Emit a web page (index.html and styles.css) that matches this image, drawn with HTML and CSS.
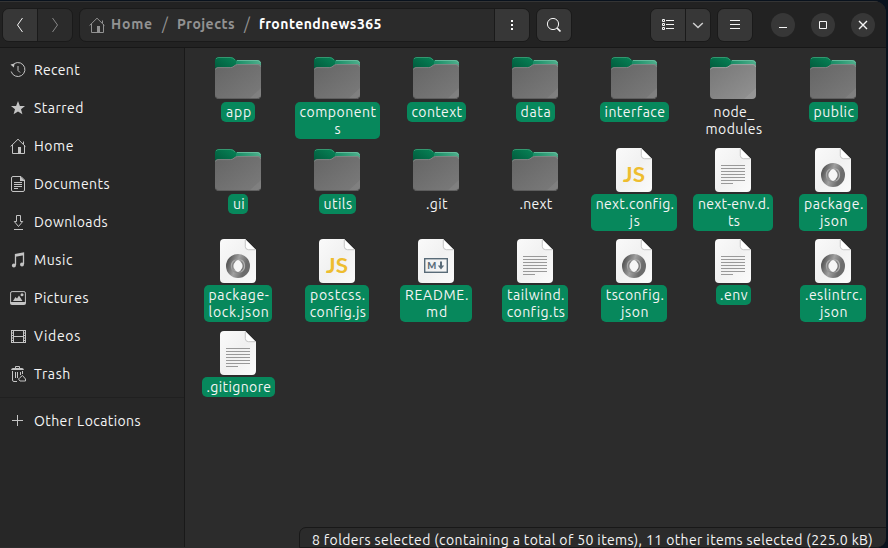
FILE: index.html
```html
<!DOCTYPE html>
<html lang="en">
<head>
<meta charset="utf-8">
<title>frontendnews365</title>
<link rel="stylesheet" href="styles.css">
</head>
<body>
<svg class="defs" width="0" height="0" aria-hidden="true">
  <defs>
    <linearGradient id="gTab" x1="0" y1="1" x2="1" y2="0"><stop offset="0" stop-color="#00573a"/><stop offset="1" stop-color="#078457"/></linearGradient>
    <linearGradient id="gBack" x1="0" y1="0" x2="1" y2="0"><stop offset=".4" stop-color="#128961"/><stop offset="1" stop-color="#4faf8c"/></linearGradient>
    <linearGradient id="gFront" x1="0" y1="0" x2="1" y2="1"><stop offset="0" stop-color="#656565"/><stop offset="1" stop-color="#7b7b7b"/></linearGradient>
    <linearGradient id="gLight" x1="0" y1="0" x2="1" y2="1"><stop offset="0" stop-color="#777"/><stop offset="1" stop-color="#929292"/></linearGradient>
    <linearGradient id="gPage" x1="0" y1="0" x2="1" y2="1"><stop offset="0" stop-color="#fafafa"/><stop offset=".5" stop-color="#f1f1f1"/><stop offset="1" stop-color="#fbfbfb"/></linearGradient>
    <linearGradient id="gRing" x1="0" y1="0" x2="1" y2=".35"><stop offset="0" stop-color="#5c5c5c"/><stop offset=".5" stop-color="#a0a0a0"/><stop offset="1" stop-color="#6c6c6c"/></linearGradient>
    <linearGradient id="gRing2" x1="0" y1="0" x2="1" y2="1"><stop offset="0" stop-color="#bcbcbc"/><stop offset="1" stop-color="#777"/></linearGradient>
  </defs>
  <symbol id="folderBack" viewBox="0 0 46 42">
    <path d="M2 5H19L22 3H42Q46 3 46 7V18H0Z" fill="url(#gBack)"/>
    <path d="M22 3.500H42Q45 3.500 45.600 6" fill="none" stroke="#6fc3a4" stroke-width=".8"/>
    <path d="M0 14V4Q0 0 4 0H15.500Q18 0 19.500 1.800L21 3.200V8L17.500 10.500Z" fill="url(#gTab)"/>
    <path d="M1 2Q2 .5 4 .5H15.500Q18 .5 20 3" fill="none" stroke="#409f78" stroke-width=".8"/>
  </symbol>
  <symbol id="page" viewBox="0 0 36 44">
    <path d="M4 0H25L36 11V40Q36 44 32 44H4Q0 44 0 40V4Q0 0 4 0Z" fill="url(#gPage)"/>
    <path d="M25 0L36 11H28.500Q25 11 25 7.500Z" fill="#fff"/>
    <path d="M25.300 1V7.500Q25.300 10.700 28.500 10.700H35.500" fill="none" stroke="#b5b5b5" stroke-width=".8"/>
  </symbol>
  <symbol id="folder" viewBox="0 0 46 42">
    <use href="#folderBack" width="46" height="42"/>
    <path d="M3 10.200H15.500Q17.500 10.200 19 8.800Q20.500 7.200 22.500 7.200H43Q46 7.200 46 10V38Q46 42 42 42H4Q0 42 0 38V13Q0 10.200 3 10.200Z" fill="url(#gFront)"/>
    <path d="M46 31L34 42H42Q46 42 46 38Z" fill="#fff" opacity=".06"/>
    <path d="M.5 12.500Q1 10.600 3 10.600H15.500Q17.500 10.600 19 9.200Q20.500 7.600 22.500 7.600H43Q45.400 7.600 45.600 10" fill="none" stroke="#8a8a8a" stroke-width=".8"/>
    <path d="M1 40Q2 41.600 4 41.600H42Q44 41.600 45 40" fill="none" stroke="#555" stroke-width=".8"/>
  </symbol>
  <symbol id="folderLight" viewBox="0 0 46 42">
    <use href="#folderBack" width="46" height="42"/>
    <path d="M3 10.200H15.500Q17.500 10.200 19 8.800Q20.500 7.200 22.500 7.200H43Q46 7.200 46 10V38Q46 42 42 42H4Q0 42 0 38V13Q0 10.200 3 10.200Z" fill="url(#gLight)"/>
    <path d="M46 31L34 42H42Q46 42 46 38Z" fill="#fff" opacity=".07"/>
    <path d="M.5 12.500Q1 10.600 3 10.600H15.500Q17.500 10.600 19 9.200Q20.500 7.600 22.500 7.600H43Q45.400 7.600 45.600 10" fill="none" stroke="#aaa" stroke-width=".8"/>
  </symbol>
  <symbol id="text" viewBox="0 0 36 44">
    <use href="#page" width="36" height="44"/>
    <path d="M6 17.500H30M6 20.500H30M6 23.500H30M6 26.500H30M6 29.500H30M6 32.500H30M6 35.500H18" stroke="#999" stroke-width="1"/>
  </symbol>
  <symbol id="js" viewBox="0 0 36 44">
    <use href="#page" width="36" height="44"/>
  </symbol>
  <symbol id="json" viewBox="0 0 36 44">
    <use href="#page" width="36" height="44"/>
    <circle cx="18" cy="27" r="8.300" fill="none" stroke="url(#gRing)" stroke-width="7.400"/>
    <path d="M18 20.500C10 21.500 10 33 18.500 33.500C13 35 10 30 11 25C12 22 14 20 18 20.500Z" fill="url(#gRing2)"/>
    <path d="M18 33.500C26 32.500 26 21 17.500 20.500C23 19 26 24 25 29C24 32 22 34 18 33.500Z" fill="#b0b0b0"/>
    <ellipse cx="18" cy="27" rx="3.700" ry="6" fill="#f6f6f6"/>
  </symbol>
  <symbol id="md" viewBox="0 0 36 44">
    <use href="#page" width="36" height="44"/>
    <rect x="6.700" y="19.700" width="22.600" height="13.600" fill="none" stroke="#596b78" stroke-width="1.400"/>
    <path d="M23 22.500V28" stroke="#596b78" stroke-width="2"/><path d="M19.800 26.500H26.200L23 30.500Z" fill="#596b78"/>
  </symbol>
  <symbol id="home" viewBox="0 0 16 16">
    <path d="M.6 8.500L8 1.200L15.400 8.500M2.500 7V15.500H14.500V7M13.500 3.500V6" fill="none" stroke="currentColor"/><path d="M8 9h3v6H8z" fill="currentColor"/>
  </symbol>
</svg>

<div class="window">
  <header class="bar">
    <div class="group nav">
      <button class="raised"><svg width="16" height="16"><path d="M10.500 1L5.500 8L10.500 15" class="line bright"/></svg></button>
      <button><svg width="16" height="16"><path d="M5.500 1L10.500 8L5.500 15" class="line dim"/></svg></button>
    </div>
    <div class="group path">
      <div class="crumbs">
        <svg width="16" height="16"><use href="#home"/></svg>
        <span class="crumb home" data-w="42">Home</span><span class="slash">/</span>
        <span class="crumb projects" data-w="58">Projects</span><span class="slash">/</span>
        <span class="crumb current" data-w="123">frontendnews365</span>
      </div>
      <button class="raised"><svg width="16" height="16"><path d="M7 3h2v2H7zM7 7h2v2H7zM7 11h2v2H7z" fill="#fff"/></svg></button>
    </div>
    <div class="group search"><button class="raised"><svg width="16" height="16"><circle cx="7" cy="7" r="5.600" class="line bright"/><path d="M11 11L14.500 14.500" stroke="#f5f5f5" stroke-width="1.700"/></svg></button></div>
    <div class="group view">
      <button class="raised"><svg width="16" height="16"><path d="M2.500 2.500h2v2h-2zM2.500 6.500h2v2h-2zM2.500 10.500h2v2h-2zM6 3.500h8M6 7.500h8M6 11.500h8" class="line bright"/></svg></button>
      <button class="raised small"><svg width="16" height="16"><path d="M3.200 6L8 10.500L12.800 6" class="line chevron"/></svg></button>
    </div>
    <div class="group menu"><button class="raised"><svg width="16" height="16"><path d="M3 3.500h10M3 7.500h10M3 11.500h10" class="line bright"/></svg></button></div>
    <div class="controls">
      <button><svg width="16" height="16"><path d="M4 10.500h8" class="line bright"/></svg></button>
      <button><svg width="16" height="16"><path d="M4.500 4.500h7v7h-7z" class="line bright"/></svg></button>
      <button><svg width="16" height="16"><path d="M4 4L12 12M12 4L4 12" stroke="#f5f5f5" stroke-width="1.400"/></svg></button>
    </div>
  </header>
  <div class="body">
    <nav class="sidebar">
      <a><svg width="16" height="16" viewBox="0 0 16 16"><path d="M2 3.800A7 7 0 1 1 1.200 9.500M8 4v4.500l2 2" class="line"/><path d="M.5 2.500L4.700 1.500L3.800 5.500Z" fill="currentColor"/></svg><span data-w="46">Recent</span></a>
      <a><svg width="16" height="16" viewBox="0 0 16 16"><path d="M8 1L9.900 5.900L15 6.100L11 9.300L12.400 14.300L8 11.400L3.600 14.300L5 9.300L1 6.100L6.100 5.900Z" fill="currentColor"/></svg><span data-w="50">Starred</span></a>
      <a><svg width="16" height="16"><use href="#home"/></svg><span data-w="40">Home</span></a>
      <a><svg width="16" height="16"><path d="M3 .5H11L14.500 4V14Q14.500 15.500 13 15.500H3Q1.500 15.500 1.500 14V2Q1.500 .5 3 .5ZM4 6.500h8M4 8.500h8M4 10.500h8M4 12.500h4" class="line"/><path d="M10 0L15 5H10Z" fill="currentColor"/></svg><span data-w="76">Documents</span></a>
      <a><svg width="16" height="16"><path d="M6.500 1.500h4v6h2.200L8.500 12.500L4.300 7.500h2.200ZM4 15.500h9" class="line"/></svg><span data-w="74">Downloads</span></a>
      <a><svg width="16" height="16"><path d="M5.500 13V2.500L13.500 1V12M5.500 4L13.500 2.500" fill="none" stroke="currentColor" stroke-width="1.300"/><circle cx="3.900" cy="13.500" r="2" fill="currentColor"/><circle cx="12" cy="12.500" r="2" fill="currentColor"/></svg><span data-w="39">Music</span></a>
      <a><svg width="16" height="16"><rect x=".6" y="1.600" width="14.800" height="12" rx="1.500" class="line"/><path d="M0 12h16v1q0 2-2 2H2q-2 0-2-2zM3 11L5.500 7L7 8.500L9 5.500L12.500 11Z" fill="currentColor"/><circle cx="12" cy="4.800" r="1.500" fill="currentColor"/></svg><span data-w="55">Pictures</span></a>
      <a><svg width="16" height="16"><path d="M1.500 2v13M3.500 2v13M13.500 2v13M15.500 2v13M1 2.500h15M1 14.500h15M3 8.500h11" class="line"/><path d="M2.500 2v13M14.500 2v13" stroke="currentColor" stroke-dasharray="1 1.500"/></svg><span data-w="47">Videos</span></a>
      <a><svg width="16" height="16"><path d="M5.500 2V.5h4V2M2.500 5v9q0 1.500 1.500 1.500h3M5.500 6v6M7.500 6v6M10.500 6v3M12.500 5v3" class="line"/><path d="M1 4Q1.500 2 3 2h9q1.500 0 2 2z" fill="currentColor"/><path d="M10 11.500L12.500 9.500L15.500 13V15H10L8.500 13Z" class="line"/></svg><span data-w="37">Trash</span></a>
      <hr>
      <a><svg width="16" height="16"><path d="M7.500 2v11M2 7.500h11" class="line"/></svg><span data-w="107">Other Locations</span></a>
    </nav>
    <main class="files" id="files"></main>
    <div class="status"><span data-w="561">8 folders selected (containing a total of 50 items), 11 other items selected (225.0 kB)</span></div>
  </div>
</div>
<script src="main.js"></script>
</body>
</html>
```
FILE: styles.css
```css
* { box-sizing: border-box; }
body { margin: 0; width: 888px; height: 548px; overflow: hidden; background: #09121d; font: 14px/17px Ubuntu, "Noto Sans", sans-serif; color: #f5f5f5; }
.defs { position: absolute; }
svg { display: block; flex: none; }
button { margin: 0; padding: 0; border: 0; background: none; color: inherit; display: flex; align-items: center; justify-content: center; }
.window { width: 886px; height: 547px; margin-top: 1px; border-radius: 0 12px 10px 0; overflow: hidden; background: #2c2c2c; }
.bar { height: 47px; padding: 6px 11px 0 2px; display: flex; align-items: flex-start; background: #222; border-top: 1px solid #343434; border-bottom: 1px solid #171717; }
.group { height: 34px; display: flex; border: 1px solid #1a1a1a; border-radius: 7px; overflow: hidden; background: #2b2b2b; flex: none; }
.group button { width: 34px; flex: none; }
.group button + button, .crumbs + button { border-left: 1px solid #1a1a1a; }
.raised { background: #373737; }
.nav { width: 71px; }
.nav button + button { width: 35px; }
.path { width: 451px; margin-left: 6px; }
.crumbs { flex: 1; display: flex; align-items: center; padding-left: 9px; color: #929292; }
.crumbs span { padding-bottom: 2px; }
.path .raised { width: 35px; }
.crumb { font-weight: 700; margin-left: 6px; }
.slash { width: 24px; text-align: center; font-size: 16px; }
.slash + .crumb { margin-left: 0; }
.current { color: #fff; }
.search { width: 36px; margin-left: 6px; }
.view { width: 61px; margin-left: 78px; }
.view .small { width: 25px; }
.menu { width: 36px; margin-left: 6px; }
.controls { margin: 5px 0 0 auto; display: flex; gap: 16px; }
.controls button { width: 24px; height: 24px; border-radius: 50%; background: #373737; }
.line { fill: none; stroke: currentColor; stroke-width: 1; }
.bright { stroke: #f5f5f5; }
.dim { stroke: #888; }
.chevron { stroke: #ccc; stroke-width: 1.5; }
.body { position: relative; display: flex; height: 499px; }
.sidebar { width: 185px; flex: none; padding-top: 3px; background: #272727; border-right: 1px solid #191919; }
.sidebar a { height: 38px; display: flex; align-items: center; gap: 8px; padding-left: 10px; }
.sidebar svg { color: #c4c4c4; }
.sidebar hr { margin: 4px 0; height: 1px; border: 0; background: #202020; }
span[data-w] { display: inline-block; white-space: nowrap; width: max-content; }
.files { padding: 8px 0 0 3px; display: grid; grid-template-columns: repeat(6, 99px) 102px; grid-template-rows: 92px 91px 92px 92px; }
.item { width: 100px; display: flex; flex-direction: column; align-items: center; }
.item:nth-child(7n) { width: 102px; }
.icon { height: 46px; display: flex; align-items: flex-start; padding-top: 1px; }
.icon.file { padding-top: 0; }
.label { display: flex; flex-direction: column; align-items: center; padding: 2px 0 1px 2px; border-radius: 5px; }
.selected { background: #07885c; }
.js-mark { font: 700 20px Lato, sans-serif; fill: #eebd2f; }
.md-mark { font: 900 10px Lato, sans-serif; fill: #596b78; }
.status { position: absolute; right: -1px; bottom: -1px; width: 588px; height: 21px; padding: 4px 0 0 12px; border: 1px solid #181818; border-radius: 7px 0 10px 0; background: #2b2b2b; }
.status span { display: block; }
```
FILE: main.js
```js
// kind, selected, label box width, then [text, width] for each line
const items = [
  ["folder", 1, 34, ["app", 26]],
  ["folder", 1, 85, ["component", 77], ["s", 7]],
  ["folder", 1, 59, ["context", 51]],
  ["folder", 1, 39, ["data", 31]],
  ["folder", 1, 69, ["interface", 61]],
  ["folderLight", 0, 65, ["node_", 41], ["modules", 57]],
  ["folder", 1, 49, ["public", 41]],
  ["folder", 1, 20, ["ui", 12]],
  ["folder", 1, 37, ["utils", 29]],
  ["folder", 0, 31, [".git", 22]],
  ["folder", 0, 42, [".next", 33]],
  ["js", 1, 86, ["next.config.", 78], ["js", 11]],
  ["text", 1, 80, ["next-env.d.", 72], ["ts", 12]],
  ["json", 1, 68, ["package.", 60], ["json", 28]],
  ["json", 1, 68, ["package-", 61], ["lock.json", 61]],
  ["js", 1, 64, ["postcss.", 56], ["config.js", 56]],
  ["md", 1, 72, ["README.", 64], ["md", 22]],
  ["text", 1, 66, ["tailwind.", 58], ["config.ts", 58]],
  ["json", 1, 66, ["tsconfig.", 58], ["json", 28]],
  ["text", 1, 35, [".env", 28]],
  ["json", 1, 66, [".eslintrc.", 58], ["json", 28]],
  ["text", 1, 73, [".gitignore", 65]]
];

const marks = {
  js: '<text x="7" y="34" class="js-mark" textLength="22" lengthAdjust="spacingAndGlyphs">JS</text>',
  md: '<text x="9.3" y="30" class="md-mark" textLength="9" lengthAdjust="spacingAndGlyphs">M</text>'
};

document.getElementById("files").innerHTML = items.map(([kind, selected, width, ...lines]) => {
  const folder = kind.startsWith("folder");
  const [w, h] = folder ? [46, 42] : [36, 44];
  return `<div class="item"><div class="icon ${folder ? "" : "file"}"><svg width="${w}" height="${h}"><use href="#${kind}"/>${marks[kind] || ""}</svg></div>
    <div class="label ${selected ? "selected" : ""}" style="width:${width}px">${lines.map(([t, n]) => `<span data-w="${n}">${t}</span>`).join("")}</div></div>`;
}).join("");

// Track each label so that it fills its measured width
for (const el of document.querySelectorAll("[data-w]")) {
  const target = Number(el.dataset.w);
  const natural = el.getBoundingClientRect().width;
  el.style.letterSpacing = `${(target - natural) / el.textContent.length}px`;
}
```
